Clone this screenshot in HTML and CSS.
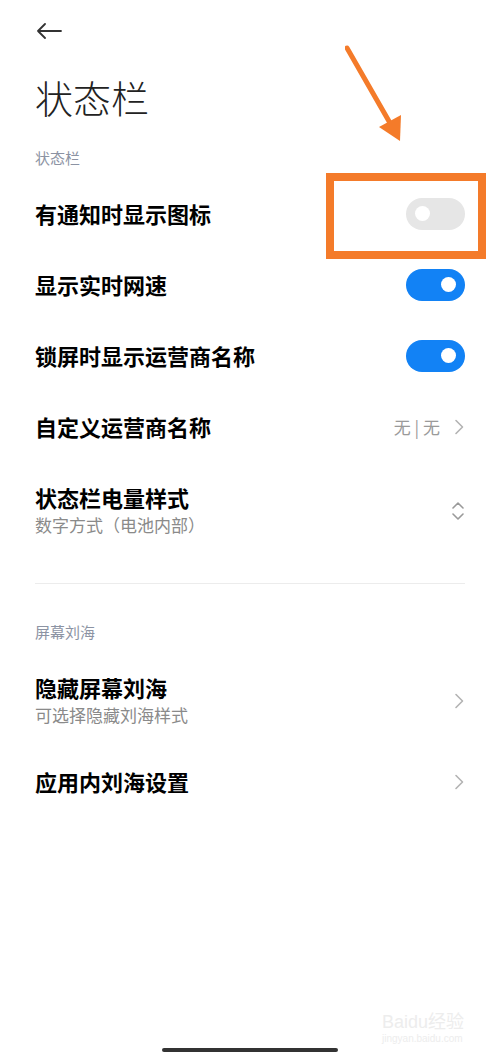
FILE: index.html
```html
<!DOCTYPE html>
<html lang="zh-CN">
<head>
  <meta charset="UTF-8">
  <meta name="viewport" content="width=device-width, initial-scale=1.0">
  <title>状态栏</title>
  <link rel="stylesheet" href="styles.css">
</head>
<body>
  <div class="page">

    <div class="topbar">
      <svg class="back" width="26" height="16" viewBox="0 0 26 16">
        <path d="M25 8H2M9 1L2 8l7 7" fill="none" stroke="#333" stroke-width="1.8" stroke-linecap="round" stroke-linejoin="round"/>
      </svg>
    </div>

    <h1 class="title">状态栏</h1>

    <!-- 状态栏 -->
    <div class="section-label">状态栏</div>

    <div class="row">
      <div class="row-text">有通知时显示图标</div>
      <div class="switch"><span class="knob"></span></div>
    </div>

    <div class="row">
      <div class="row-text">显示实时网速</div>
      <div class="switch on"><span class="knob"></span></div>
    </div>

    <div class="row">
      <div class="row-text">锁屏时显示运营商名称</div>
      <div class="switch on"><span class="knob"></span></div>
    </div>

    <div class="row">
      <div class="row-text">自定义运营商名称</div>
      <div class="row-end">
        <span class="value">无 | 无</span>
        <svg class="chevron" width="10" height="16" viewBox="0 0 10 16">
          <path d="M2 1.5L8.5 8 2 14.5" fill="none" stroke="#b3b3b3" stroke-width="1.6" stroke-linecap="round" stroke-linejoin="round"/>
        </svg>
      </div>
    </div>

    <div class="row tall">
      <div>
        <div class="row-text">状态栏电量样式</div>
        <div class="row-sub">数字方式（电池内部）</div>
      </div>
      <svg class="updown" width="14" height="20" viewBox="0 0 14 20">
        <path d="M2 7l5-5 5 5M2 13l5 5 5-5" fill="none" stroke="#9a9a9a" stroke-width="1.6" stroke-linecap="round" stroke-linejoin="round"/>
      </svg>
    </div>

    <div class="divider"></div>

    <!-- 屏幕刘海 -->
    <div class="section-label second">屏幕刘海</div>

    <div class="row tall short">
      <div>
        <div class="row-text">隐藏屏幕刘海</div>
        <div class="row-sub">可选择隐藏刘海样式</div>
      </div>
      <svg class="chevron" width="10" height="16" viewBox="0 0 10 16">
        <path d="M2 1.5L8.5 8 2 14.5" fill="none" stroke="#b3b3b3" stroke-width="1.6" stroke-linecap="round" stroke-linejoin="round"/>
      </svg>
    </div>

    <div class="row">
      <div class="row-text">应用内刘海设置</div>
      <svg class="chevron" width="10" height="16" viewBox="0 0 10 16">
        <path d="M2 1.5L8.5 8 2 14.5" fill="none" stroke="#b3b3b3" stroke-width="1.6" stroke-linecap="round" stroke-linejoin="round"/>
      </svg>
    </div>

    <div class="home-bar"></div>

    <!-- annotation drawn over the screenshot -->
    <div class="mark-box"></div>
    <svg class="mark-arrow" width="80" height="110" viewBox="0 0 80 110">
      <path d="M2 3L45 78" stroke="#f47b2a" stroke-width="5" stroke-linecap="round"/>
      <path d="M34 82L56 70 55 96z" fill="#f47b2a"/>
    </svg>

    <div class="watermark">
      <span class="wm-logo">Bai<b>du</b>经验</span>
      <span class="wm-url">jingyan.baidu.com</span>
    </div>
  </div>
</body>
</html>
```

FILE: styles.css
```css
body {
  margin: 0;
  background-color: #fff;
  font-family: "Noto Sans CJK SC", "Noto Sans", sans-serif;
  color: #000;
}

.page {
  position: relative;
  min-height: 1060px;
  padding: 0 35px;
  box-sizing: border-box;
  display: flex;
  flex-direction: column;
}

.topbar {
  height: 60px;
  display: flex;
  align-items: center;
}

.back {
  margin-left: 1px;
  margin-top: 2px;
}

.title {
  margin: 12px 0 0;
  height: 50px;
  line-height: 50px;
  font-size: 38px;
  font-weight: 300;
  color: #222;
}

.section-label {
  margin: 26px 0 10px;
  line-height: 20px;
  font-size: 15px;
  color: #8c93a3;
}

.section-label.second {
  margin: 38px 0 13px;
}

.row {
  height: 71px;
  display: flex;
  align-items: center;
  justify-content: space-between;
}

.row.tall {
  height: 97px;
}

.row.tall.short {
  height: 91px;
}

.row-text {
  font-size: 22px;
  font-weight: 700;
  line-height: 27px;
}

.row-sub {
  font-size: 17px;
  line-height: 27px;
  color: #8a8a8a;
}

.row-end {
  display: flex;
  align-items: center;
  gap: 14px;
}

.value {
  font-size: 17px;
  color: #9a9a9a;
}

.chevron {
  margin-right: 1px;
}

.switch {
  width: 59px;
  height: 32px;
  border-radius: 16px;
  background-color: #e6e6e6;
  box-sizing: border-box;
  padding: 0 9px;
  display: flex;
  align-items: center;
  justify-content: flex-start;
}

.switch.on {
  background-color: #1282f5;
  justify-content: flex-end;
}

.knob {
  width: 15px;
  height: 15px;
  border-radius: 50%;
  background-color: #fff;
}

.divider {
  margin-top: 24px;
  height: 1px;
  background-color: #ececec;
}

.home-bar {
  margin: auto auto 8px;
  width: 176px;
  height: 4px;
  border-radius: 2px;
  background-color: #333;
}

.mark-box {
  position: absolute;
  left: 326px;
  top: 173px;
  width: 160px;
  height: 86px;
  box-sizing: border-box;
  border: 8px solid #f47b2a;
}

.mark-arrow {
  position: absolute;
  left: 345px;
  top: 45px;
}

.watermark {
  position: absolute;
  left: 382px;
  top: 1012px;
  display: flex;
  flex-direction: column;
  color: #ededed;
  font-family: "Liberation Sans", sans-serif;
}

.wm-logo {
  font-size: 18px;
  line-height: 20px;
}

.wm-logo b {
  font-weight: 400;
}

.wm-url {
  font-size: 10px;
  line-height: 14px;
}
```
